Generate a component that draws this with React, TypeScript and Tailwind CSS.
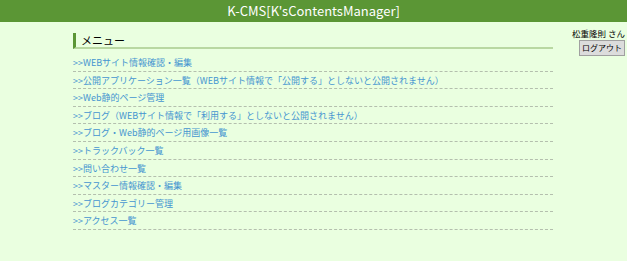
import React from 'react';

const items = [
  'WEBサイト情報確認・編集',
  '公開アプリケーション一覧（WEBサイト情報で「公開する」としないと公開されません）',
  'Web静的ページ管理',
  'ブログ（WEBサイト情報で「利用する」としないと公開されません）',
  'ブログ・Web静的ページ用画像一覧',
  'トラックバック一覧',
  '問い合わせ一覧',
  'マスター情報確認・編集',
  'ブログカテゴリー管理',
  'アクセス一覧',
];

const font = { fontFamily: '"Noto Sans CJK JP", "Liberation Sans", sans-serif' };

export default function App() {
  return (
    <div className="w-[627px] h-[261px] bg-[#eaffe0] overflow-hidden" style={font}>
      <div className="h-[22px] bg-[#5b9635] text-white text-[13px] leading-[22px] text-center">
        K-CMS[K'sContentsManager]
      </div>
      <div className="flex">
        <div className="ml-[73px] w-[480px] pt-[11px]">
          <div className="border-l-[3px] border-[#5b9635] border-b-2 border-b-[#b9d8a2] pl-[5px] h-[16px] text-[11px] leading-[14px] text-black">
            メニュー
          </div>
          <ul className="mt-[5px]">
            {items.map((t, i) => (
              <li key={i} className="h-[17.6px] border-b border-dashed border-[#b4bfae] text-[9px] leading-[17px] text-[#4595d0] whitespace-nowrap">
                &gt;&gt;{t}
              </li>
            ))}
          </ul>
        </div>
        <div className="ml-auto pt-[5px] pr-[2px] flex flex-col items-end">
          <div className="text-[8.5px] leading-[12px] text-black whitespace-nowrap">松重隆則 さん</div>
          <button className="mt-[1px] h-[16px] px-[2px] bg-[#dcdcdc] border border-[#a0a0a0] text-[8px] leading-[14px] text-black whitespace-nowrap">
            ログアウト
          </button>
        </div>
      </div>
    </div>
  );
}
